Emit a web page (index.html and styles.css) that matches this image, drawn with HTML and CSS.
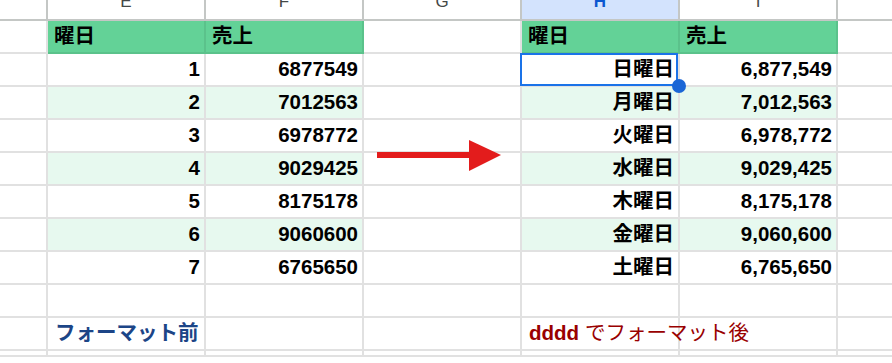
FILE: index.html
```html
<!DOCTYPE html>
<html lang="ja">
<head>
<meta charset="utf-8">
<title>dddd フォーマット</title>
<link rel="stylesheet" href="styles.css">
</head>
<body>
<div class="sheet">
  <div class="grid">
    <!-- column headers -->
    <div class="ch"></div>
    <div class="ch">E</div>
    <div class="ch">F</div>
    <div class="ch">G</div>
    <div class="ch ch-sel">H</div>
    <div class="ch">I</div>
    <div class="ch ch-last"></div>

    <!-- header row -->
    <div class="c"></div>
    <div class="c hd">曜日</div>
    <div class="c hd">売上</div>
    <div class="c"></div>
    <div class="c hd">曜日</div>
    <div class="c hd">売上</div>
    <div class="c c-last"></div>

    <div class="c"></div>
    <div class="c num">1</div>
    <div class="c num">6877549</div>
    <div class="c"></div>
    <div class="c num sel">日曜日</div>
    <div class="c num">6,877,549</div>
    <div class="c c-last"></div>

    <div class="c"></div>
    <div class="c num alt">2</div>
    <div class="c num alt">7012563</div>
    <div class="c"></div>
    <div class="c num alt">月曜日</div>
    <div class="c num alt">7,012,563</div>
    <div class="c c-last"></div>

    <div class="c"></div>
    <div class="c num">3</div>
    <div class="c num">6978772</div>
    <div class="c"></div>
    <div class="c num">火曜日</div>
    <div class="c num">6,978,772</div>
    <div class="c c-last"></div>

    <div class="c"></div>
    <div class="c num alt">4</div>
    <div class="c num alt">9029425</div>
    <div class="c"></div>
    <div class="c num alt">水曜日</div>
    <div class="c num alt">9,029,425</div>
    <div class="c c-last"></div>

    <div class="c"></div>
    <div class="c num">5</div>
    <div class="c num">8175178</div>
    <div class="c"></div>
    <div class="c num">木曜日</div>
    <div class="c num">8,175,178</div>
    <div class="c c-last"></div>

    <div class="c"></div>
    <div class="c num alt">6</div>
    <div class="c num alt">9060600</div>
    <div class="c"></div>
    <div class="c num alt">金曜日</div>
    <div class="c num alt">9,060,600</div>
    <div class="c c-last"></div>

    <div class="c"></div>
    <div class="c num">7</div>
    <div class="c num">6765650</div>
    <div class="c"></div>
    <div class="c num">土曜日</div>
    <div class="c num">6,765,650</div>
    <div class="c c-last"></div>

    <div class="c"></div>
    <div class="c"></div>
    <div class="c"></div>
    <div class="c"></div>
    <div class="c"></div>
    <div class="c"></div>
    <div class="c c-last"></div>

    <div class="c"></div>
    <div class="c note note-blue">フォーマット前</div>
    <div class="c"></div>
    <div class="c"></div>
    <div class="c note note-red"><b>dddd</b> でフォーマット後</div>
    <div class="c"></div>
    <div class="c c-last"></div>

    <div class="c"></div>
    <div class="c"></div>
    <div class="c"></div>
    <div class="c"></div>
    <div class="c"></div>
    <div class="c"></div>
    <div class="c c-last"></div>
  </div>

  <svg class="arrow" width="130" height="34" viewBox="0 0 130 34" aria-hidden="true">
    <rect x="0" y="12" width="94" height="6" fill="#e31c1c"/>
    <polygon points="92,0 124,15 92,31" fill="#e31c1c"/>
  </svg>
</div>
</body>
</html>
```

FILE: styles.css
```css
* { box-sizing: border-box; }

html, body {
  margin: 0;
  padding: 0;
  background: #ffffff;
  overflow: hidden;
}

.sheet {
  position: relative;
  width: 892px;
  height: 363px;
  overflow: hidden;
  font-family: "Liberation Sans", "Noto Sans CJK JP", sans-serif;
}

.grid {
  display: grid;
  grid-template-columns: 48px repeat(5, 158px) 1fr;
  grid-template-rows: 21px repeat(10, 33px);
}

.ch {
  border-right: 2px solid #c4c7c5;
  border-bottom: 2px solid #c4c7c5;
  background: #ffffff;
  color: #444746;
  font-size: 17px;
  line-height: 17px;
  text-align: center;
  display: flex;
  align-items: flex-end;
  justify-content: center;
  padding-bottom: 9px;
  overflow: visible;
}

.ch-sel {
  background: #d3e3fd;
  color: #0b57d0;
  font-weight: bold;
}

.ch-last { border-right: none; }

.c {
  border-right: 2px solid #e1e1e1;
  border-bottom: 2px solid #e1e1e1;
  font-size: 20.5px;
  line-height: 24px;
  font-weight: bold;
  color: #000000;
  display: flex;
  align-items: flex-end;
  padding: 0 4px 4px 6px;
  white-space: nowrap;
}

.c-last { border-right: none; }

.hd {
  background: #63d297;
  border-right-color: #5bc28b;
  border-bottom-color: #5bc28b;
}

.num { justify-content: flex-end; }

.alt { background: #e7f9ef; }

.note { padding-left: 7px; }

.note-blue { color: #1c4587; }

.note-red {
  color: #990000;
  font-weight: normal;
}

.note-red b { font-weight: bold; margin-right: 6px; }

.sel { position: relative; }

.sel::after {
  content: "";
  position: absolute;
  left: -2px;
  top: -1px;
  right: 0;
  bottom: -1px;
  border: 2px solid #1a73e8;
  pointer-events: none;
}

.sel::before {
  content: "";
  position: absolute;
  right: -8px;
  bottom: -8px;
  width: 14px;
  height: 14px;
  border-radius: 50%;
  background: #1a66d6;
  z-index: 2;
}

.arrow {
  position: absolute;
  left: 377px;
  top: 140px;
}
```
